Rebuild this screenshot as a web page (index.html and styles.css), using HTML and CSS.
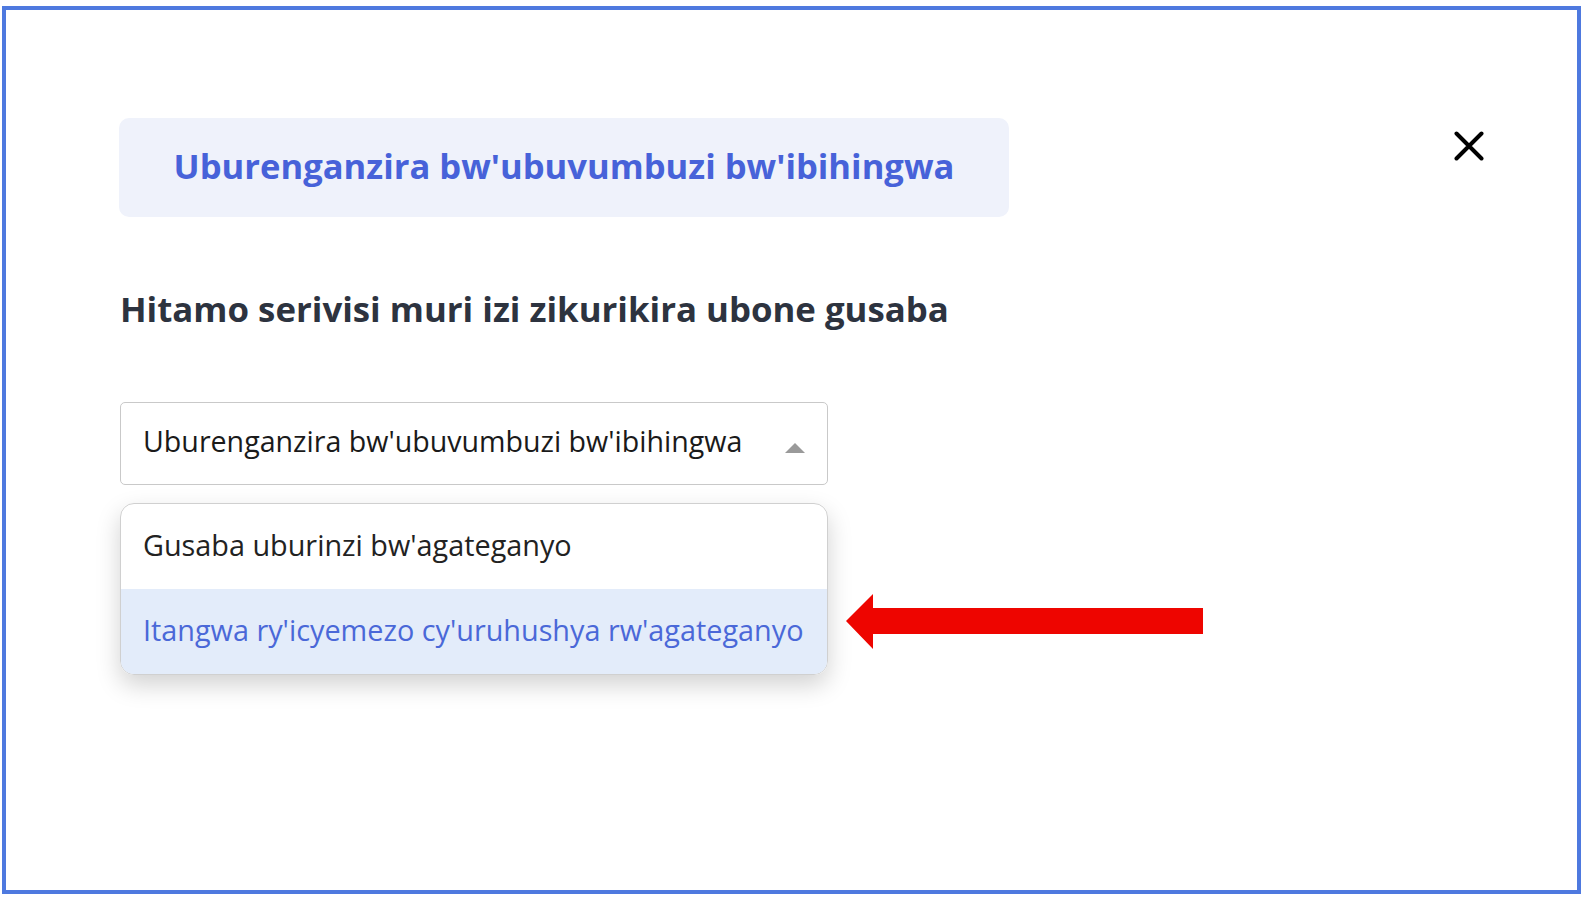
FILE: index.html
```html
<!DOCTYPE html>
<html lang="rw">
<head>
<meta charset="utf-8">
<title>Serivisi</title>
<link rel="stylesheet" href="styles.css">
</head>
<body>
<div class="frame">
  <div class="header">
    <div class="chip"><span class="chip-text">Uburenganzira bw'ubuvumbuzi bw'ibihingwa</span></div>
    <button class="close" aria-label="Close">
      <svg width="30" height="30" viewBox="0 0 30 30"><path d="M2.5 2.5 L27.5 27.5 M27.5 2.5 L2.5 27.5" stroke="#000" stroke-width="4" stroke-linecap="round" fill="none"/></svg>
    </button>
  </div>
  <h2 class="title">Hitamo serivisi muri izi zikurikira ubone gusaba</h2>
  <div class="picker">
    <div class="select">
      <span class="select-text">Uburenganzira bw'ubuvumbuzi bw'ibihingwa</span>
      <span class="caret"></span>
    </div>
    <div class="menu-row">
      <ul class="menu">
        <li class="option">Gusaba uburinzi bw'agateganyo</li>
        <li class="option active">Itangwa ry'icyemezo cy'uruhushya rw'agateganyo</li>
      </ul>
      <svg class="arrow" width="358" height="56" viewBox="0 0 358 56"><polygon points="0,27 27,0 27,14 357,14 357,40 27,40 27,55" fill="#ee0500"/></svg>
    </div>
  </div>
</div>
</body>
</html>
```
FILE: styles.css
```css
* { box-sizing: border-box; }
html, body { margin: 0; padding: 0; background: #fff; }
body { font-family: "Open Sans", "Noto Sans", sans-serif; width: 1590px; height: 897px; overflow: hidden; }
.frame {
  margin: 6px 9px 3px 2px;
  height: 888px;
  border: 4px solid #4e79df;
  padding: 108px 93px 0 113px;
}
.header { display: flex; align-items: flex-start; }
.chip {
  width: 890px; height: 99px;
  background: #eff2fb;
  border-radius: 10px;
  display: flex; align-items: center; justify-content: center;
  padding-bottom: 5px;
}
.chip-text { font-weight: 700; font-size: 34.6px; color: #4762d9; white-space: nowrap; }
.close {
  margin-left: auto; margin-top: 13px;
  border: 0; background: none; padding: 0; width: 30px; height: 30px;
  display: block;
}
.close svg { display: block; }
.title {
  margin: 68px 0 0 1px;
  font-size: 34.8px; line-height: 48px; font-weight: 700; color: #2d333f;
  white-space: nowrap;
}
.picker { margin-top: 69px; margin-left: 1px; }
.select {
  width: 708px; height: 83px;
  border: 1px solid #c9c9c9; border-radius: 5px;
  display: flex; align-items: center;
  padding: 0 22px 6px;
  font-size: 28.6px; color: #1a1a1a;
}
.select-text { flex: 1; white-space: nowrap; }
.caret { width: 0; height: 0; border-left: 10.5px solid transparent; border-right: 10.5px solid transparent; border-bottom: 10px solid #9a9a9a; margin-top: 15px; }
.menu-row { display: flex; align-items: flex-start; margin-top: 18px; }
.menu {
  list-style: none; margin: 0; padding: 0;
  width: 708px;
  border: 1px solid #d0d0d0; border-radius: 14px;
  overflow: hidden;
  box-shadow: 0 10px 24px rgba(0,0,0,0.18);
  font-size: 28.8px;
}
.option { height: 85px; display: flex; align-items: center; padding: 0 10px 4px 22px; color: #222; white-space: nowrap; }
.option.active { background: #e3ecfa; color: #4a68d8; }
.arrow { margin-left: 18px; margin-top: 91px; display: block; flex: none; }
```
